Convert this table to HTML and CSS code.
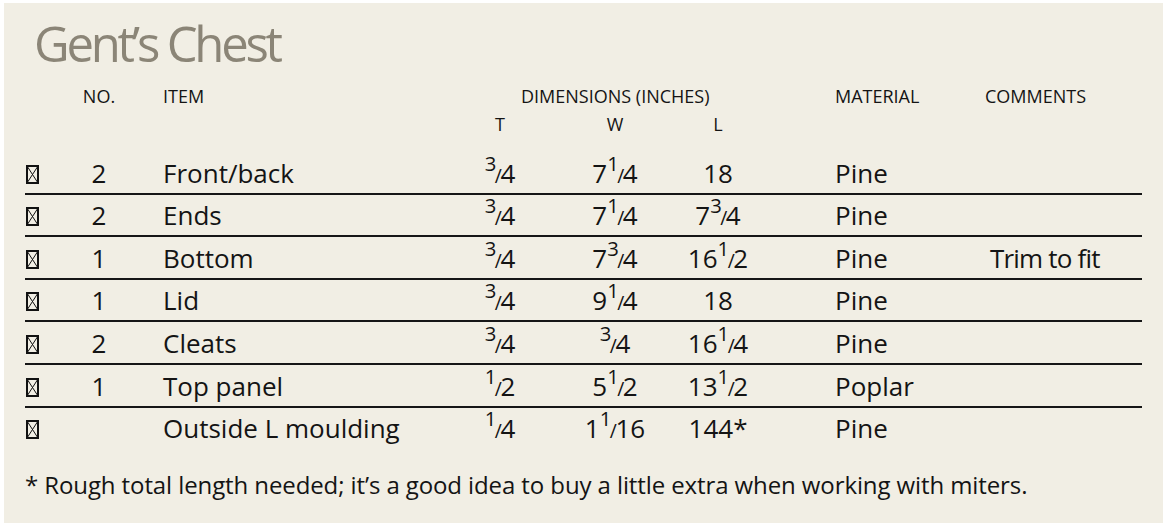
FILE: index.html
```html
<!DOCTYPE html>
<html lang="en">
<head>
<meta charset="utf-8">
<title>Gent's Chest</title>
<link rel="stylesheet" href="styles.css">
</head>
<body>
<div class="panel">
  <h1 class="title">Gent’s Chest</h1>
  <div class="table">
    <div class="head">
      <div class="c1"></div>
      <div class="c2">NO.</div>
      <div class="c3">ITEM</div>
      <div class="dims">DIMENSIONS (INCHES)</div>
      <div class="c7">MATERIAL</div>
      <div class="c8">COMMENTS</div>
    </div>
    <div class="head sub">
      <div class="c1"></div>
      <div class="c2"></div>
      <div class="c3"></div>
      <div class="c4">T</div>
      <div class="c5">W</div>
      <div class="c6">L</div>
      <div class="c7"></div>
      <div class="c8"></div>
    </div>

    <div class="row">
      <div class="c1"><svg class="box" viewBox="0 0 13 19"><rect x="1" y="1" width="11" height="17"/><path d="M1 1L12 18M12 1L1 18"/></svg></div>
      <div class="c2">2</div>
      <div class="c3">Front/back</div>
      <div class="c4"><span class="num">3</span><span class="sl">/</span>4</div>
      <div class="c5">7<span class="num">1</span><span class="sl">/</span>4</div>
      <div class="c6">18</div>
      <div class="c7">Pine</div>
      <div class="c8"></div>
    </div>
    <div class="row">
      <div class="c1"><svg class="box" viewBox="0 0 13 19"><rect x="1" y="1" width="11" height="17"/><path d="M1 1L12 18M12 1L1 18"/></svg></div>
      <div class="c2">2</div>
      <div class="c3">Ends</div>
      <div class="c4"><span class="num">3</span><span class="sl">/</span>4</div>
      <div class="c5">7<span class="num">1</span><span class="sl">/</span>4</div>
      <div class="c6">7<span class="num">3</span><span class="sl">/</span>4</div>
      <div class="c7">Pine</div>
      <div class="c8"></div>
    </div>
    <div class="row">
      <div class="c1"><svg class="box" viewBox="0 0 13 19"><rect x="1" y="1" width="11" height="17"/><path d="M1 1L12 18M12 1L1 18"/></svg></div>
      <div class="c2">1</div>
      <div class="c3">Bottom</div>
      <div class="c4"><span class="num">3</span><span class="sl">/</span>4</div>
      <div class="c5">7<span class="num">3</span><span class="sl">/</span>4</div>
      <div class="c6">16<span class="num">1</span><span class="sl">/</span>2</div>
      <div class="c7">Pine</div>
      <div class="c8 cm">Trim to fit</div>
    </div>
    <div class="row">
      <div class="c1"><svg class="box" viewBox="0 0 13 19"><rect x="1" y="1" width="11" height="17"/><path d="M1 1L12 18M12 1L1 18"/></svg></div>
      <div class="c2">1</div>
      <div class="c3">Lid</div>
      <div class="c4"><span class="num">3</span><span class="sl">/</span>4</div>
      <div class="c5">9<span class="num">1</span><span class="sl">/</span>4</div>
      <div class="c6">18</div>
      <div class="c7">Pine</div>
      <div class="c8"></div>
    </div>
    <div class="row">
      <div class="c1"><svg class="box" viewBox="0 0 13 19"><rect x="1" y="1" width="11" height="17"/><path d="M1 1L12 18M12 1L1 18"/></svg></div>
      <div class="c2">2</div>
      <div class="c3">Cleats</div>
      <div class="c4"><span class="num">3</span><span class="sl">/</span>4</div>
      <div class="c5"><span class="num">3</span><span class="sl">/</span>4</div>
      <div class="c6">16<span class="num">1</span><span class="sl">/</span>4</div>
      <div class="c7">Pine</div>
      <div class="c8"></div>
    </div>
    <div class="row">
      <div class="c1"><svg class="box" viewBox="0 0 13 19"><rect x="1" y="1" width="11" height="17"/><path d="M1 1L12 18M12 1L1 18"/></svg></div>
      <div class="c2">1</div>
      <div class="c3">Top panel</div>
      <div class="c4"><span class="num">1</span><span class="sl">/</span>2</div>
      <div class="c5">5<span class="num">1</span><span class="sl">/</span>2</div>
      <div class="c6">13<span class="num">1</span><span class="sl">/</span>2</div>
      <div class="c7">Poplar</div>
      <div class="c8"></div>
    </div>
    <div class="row last">
      <div class="c1"><svg class="box" viewBox="0 0 13 19"><rect x="1" y="1" width="11" height="17"/><path d="M1 1L12 18M12 1L1 18"/></svg></div>
      <div class="c2"></div>
      <div class="c3">Outside L moulding</div>
      <div class="c4"><span class="num">1</span><span class="sl">/</span>4</div>
      <div class="c5">1<span class="num">1</span><span class="sl">/</span>16</div>
      <div class="c6">144*</div>
      <div class="c7">Pine</div>
      <div class="c8"></div>
    </div>
  </div>
  <p class="note">* Rough total length needed; it’s a good idea to buy a little extra when working with miters.</p>
</div>
</body>
</html>
```

FILE: styles.css
```css
html, body {
  margin: 0;
  padding: 0;
  background: #ffffff;
}

body {
  font-family: "Open Sans", "Noto Sans", sans-serif;
  color: #141414;
}

.panel {
  box-sizing: border-box;
  width: 1159px;
  height: 520px;
  margin: 3px 0 0 4px;
  padding: 10px 21px 0 21px;
  background: #f1eee4;
}

.title {
  margin: 0 0 9px 9px;
  font-size: 49px;
  line-height: 60px;
  font-weight: 400;
  letter-spacing: -3.2px;
  color: #8b8577;
}

.table {
  display: flex;
  flex-direction: column;
}

.head,
.row {
  display: grid;
  grid-template-columns: 45px 58px 317px 110px 120px 86px 224px 157px;
}

.head {
  font-size: 18px;
  line-height: 28px;
}

.head .dims {
  grid-column: 4 / span 3;
  padding-left: 76px;
}

.sub {
  margin-bottom: 14px;
}

.c2,
.c4,
.c5,
.c6 {
  text-align: center;
}

.c3 {
  padding-left: 35px;
}

.c7 {
  padding-left: 74px;
}

.cm {
  padding-left: 5px;
  letter-spacing: -0.8px;
}

.row {
  font-size: 26px;
  line-height: 39px;
  padding-top: 1.6px;
  border-bottom: 2px solid #161616;
}

.row.last {
  border-bottom-color: transparent;
}

.box {
  width: 13px;
  height: 19px;
  margin-left: 1px;
  vertical-align: -1px;
  fill: none;
  stroke: #111111;
}

.box rect {
  stroke-width: 2;
}

.box path {
  stroke-width: 1;
}

.num {
  font-size: 0.78em;
  vertical-align: 12px;
  line-height: 0;
}

.sl {
  font-size: 0.74em;
  line-height: 0;
  margin: 0 -1.5px;
}

.note {
  margin: 20px 0 0 0;
  font-size: 24px;
  line-height: 30px;
  letter-spacing: -0.1px;
}
```
